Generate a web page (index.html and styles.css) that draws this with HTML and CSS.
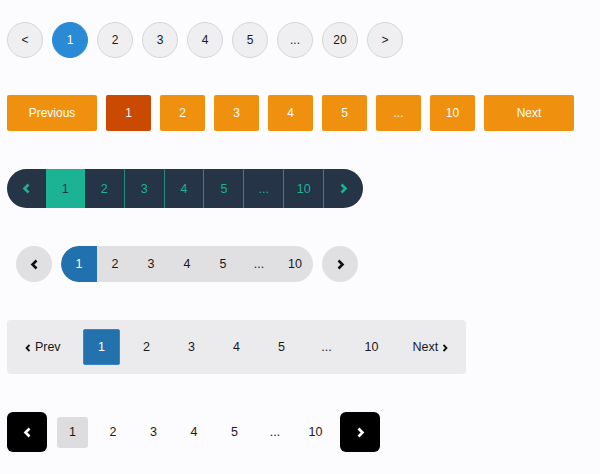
FILE: index.html
```html
<!DOCTYPE html>
<html>
<head>
<meta charset="utf-8">
<link rel="stylesheet" href="styles.css">
</head>
<body>
<div class="page">
  <div class="row circles">
    <span class="c">&lt;</span>
    <span class="c active">1</span>
    <span class="c">2</span>
    <span class="c">3</span>
    <span class="c">4</span>
    <span class="c">5</span>
    <span class="c">...</span>
    <span class="c">20</span>
    <span class="c">&gt;</span>
  </div>

  <div class="row orange">
    <span class="o wide">Previous</span>
    <span class="o active">1</span>
    <span class="o">2</span>
    <span class="o">3</span>
    <span class="o">4</span>
    <span class="o">5</span>
    <span class="o">...</span>
    <span class="o">10</span>
    <span class="o wide">Next</span>
  </div>

  <div class="row dark">
    <span class="d"><svg width="9" height="11" viewBox="0 0 9 11"><polyline points="6.5,1.5 2.5,5.5 6.5,9.5" fill="none" stroke="#1bb394" stroke-width="2.6"/></svg></span>
    <span class="d active">1</span>
    <span class="d">2</span>
    <span class="d">3</span>
    <span class="d">4</span>
    <span class="d">5</span>
    <span class="d">...</span>
    <span class="d">10</span>
    <span class="d"><svg width="9" height="11" viewBox="0 0 9 11"><polyline points="2.5,1.5 6.5,5.5 2.5,9.5" fill="none" stroke="#1bb394" stroke-width="2.6"/></svg></span>
  </div>

  <div class="row pillrow">
    <span class="round"><svg width="9" height="11" viewBox="0 0 9 11"><polyline points="6.5,1.5 2.5,5.5 6.5,9.5" fill="none" stroke="#111" stroke-width="2.6"/></svg></span>
    <div class="pill">
      <span class="p active">1</span>
      <span class="p">2</span>
      <span class="p">3</span>
      <span class="p">4</span>
      <span class="p">5</span>
      <span class="p">...</span>
      <span class="p">10</span>
    </div>
    <span class="round"><svg width="9" height="11" viewBox="0 0 9 11"><polyline points="2.5,1.5 6.5,5.5 2.5,9.5" fill="none" stroke="#111" stroke-width="2.6"/></svg></span>
  </div>

  <div class="row boxrow">
    <span class="b edge"><svg width="6" height="8" viewBox="0 0 6 8"><polyline points="4.5,1 1.5,4 4.5,7" fill="none" stroke="#111" stroke-width="1.8"/></svg>&nbsp;Prev</span>
    <span class="b active">1</span>
    <span class="b">2</span>
    <span class="b">3</span>
    <span class="b">4</span>
    <span class="b">5</span>
    <span class="b">...</span>
    <span class="b">10</span>
    <span class="b edge">Next&nbsp;<svg width="6" height="8" viewBox="0 0 6 8"><polyline points="1.5,1 4.5,4 1.5,7" fill="none" stroke="#111" stroke-width="1.8"/></svg></span>
  </div>

  <div class="row blackrow">
    <span class="k"><svg width="9" height="11" viewBox="0 0 9 11"><polyline points="6.5,1.5 2.5,5.5 6.5,9.5" fill="none" stroke="#fff" stroke-width="2.6"/></svg></span>
    <div class="nums">
      <span class="n active">1</span>
      <span class="n">2</span>
      <span class="n">3</span>
      <span class="n">4</span>
      <span class="n">5</span>
      <span class="n">...</span>
      <span class="n">10</span>
    </div>
    <span class="k"><svg width="9" height="11" viewBox="0 0 9 11"><polyline points="2.5,1.5 6.5,5.5 2.5,9.5" fill="none" stroke="#fff" stroke-width="2.6"/></svg></span>
  </div>
</div>
</body>
</html>
```

FILE: styles.css
```css
html, body {
  margin: 0;
  padding: 0;
  background: #fcfbfd;
  font-family: "Liberation Sans", Arial, sans-serif;
  font-size: 12px;
  color: #1d1d1d;
}

.page {
  padding-top: 22px;
  display: flex;
  flex-direction: column;
  align-items: flex-start;
}

.row {
  display: flex;
  align-items: center;
  margin-left: 7px;
}

.row span {
  display: flex;
  align-items: center;
  justify-content: center;
  box-sizing: border-box;
}

/* Row 1: circles */
.circles {
  gap: 9px;
  margin-bottom: 37px;
}
.c {
  width: 36px;
  height: 36px;
  border-radius: 50%;
  background: #efeef0;
  border: 1px solid #d6d6d8;
  color: #1a1a1a;
}
.c.active {
  background: #2b8ad6;
  border-color: #2b8ad6;
  color: #fff;
}

/* Row 2: orange */
.orange {
  gap: 9px;
  margin-bottom: 38px;
}
.o {
  width: 45px;
  height: 36px;
  background: #f0900f;
  color: #fff;
  border-radius: 2px;
}
.o.wide {
  width: 90px;
}
.o.active {
  background: #c94a00;
}

/* Row 3: dark bar */
.dark {
  height: 39px;
  width: 356px;
  border-radius: 20px;
  overflow: hidden;
  background: #253446;
  margin-bottom: 38px;
}
.d {
  flex: 1 1 0;
  height: 39px;
  color: #1bb394;
  font-size: 12.5px;
  border-left: 1px solid #1d8f80;
}
.d:first-child {
  border-left: none;
}
.d.active {
  background: #1bb394;
  color: #253446;
  border-left: none;
}
.d.active + .d {
  border-left: none;
}

/* Row 4: pill */
.pillrow {
  margin-left: 16px;
  gap: 9px;
  margin-bottom: 38px;
}
.round {
  width: 36px;
  height: 36px;
  border-radius: 50%;
  background: #e0dfe2;
}
.pill {
  display: flex;
  background: #e0dfe2;
  border-radius: 18px;
  height: 36px;
  overflow: hidden;
}
.p {
  width: 36px;
  height: 36px;
  color: #1a1a1a;
  font-size: 12.5px;
}
.p.active {
  background: #2171ae;
  color: #fff;
  border-radius: 18px 0 0 18px;
}

/* Row 5: box */
.boxrow {
  width: 459px;
  height: 54px;
  background: #ebeaec;
  border-radius: 4px;
  padding: 0 4px;
  box-sizing: border-box;
  gap: 8px;
  margin-bottom: 38px;
}
.b {
  width: 37px;
  height: 36px;
  color: #1a1a1a;
  font-size: 12.5px;
}
.b.edge {
  width: 64px;
}
.b.edge svg {
  margin-top: 1px;
}
.b.active {
  background: #2371ad;
  color: #fff;
  border-radius: 2px;
  border: 1px solid #3a86c4;
}

/* Row 6: black */
.blackrow {
  gap: 10px;
}
.k {
  width: 40px;
  height: 40px;
  background: #000;
  border-radius: 6px;
}
.nums {
  display: flex;
  gap: 9.5px;
  margin-right: -1px;
}
.n {
  width: 31px;
  height: 31px;
  color: #1a1a1a;
  font-size: 12.5px;
}
.n.active {
  background: #dddcdf;
  border-radius: 3px;
}
```
